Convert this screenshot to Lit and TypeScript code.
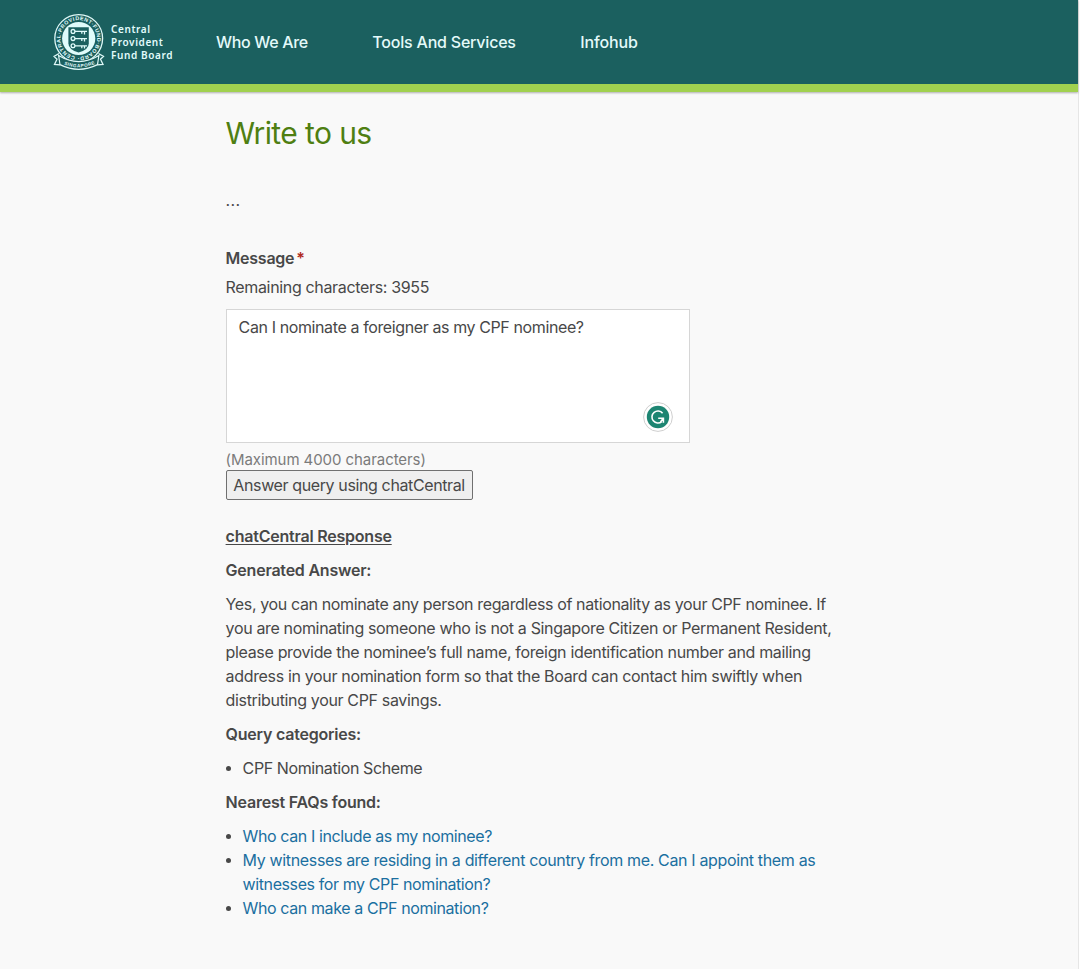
import { LitElement, html, css } from "lit";
import { customElement } from "lit/decorators.js";

@customElement("cpf-crest")
class CpfCrest extends LitElement {
  static styles = css`
    :host { display: block; width: 52px; height: 58px; }
    svg { display: block; }
    .ring { font: 700 5.3px "Liberation Sans", sans-serif; fill: #e2fcfc; }
    .band { font: 700 4.6px "Liberation Sans", sans-serif; fill: #e2fcfc; }
  `;
  render() {
    return html`<svg width="52" height="58" viewBox="0 0 52 58">
      <defs>
        <path id="circle" d="M22.2 43.5A18.3 18.3 0 0 1 29.2 7.5A18.3 18.3 0 0 1 22.2 43.5" />
        <path id="ribbon" d="M9 50.6Q25.6 58 42.5 50.6" />
      </defs>
      <circle cx="25.7" cy="25.5" r="23.9" fill="#1b605f" stroke="#dff8f7" stroke-width="1.3" />
      <circle cx="25.7" cy="25.5" r="16.6" fill="#e0fbfa" />
      <path d="M15.4 14.2h20.4v16q0 6.6-10.2 9.2q-10.2-2.6-10.2-9.2z" fill="#1b605f" />
      <g fill="none" stroke="#e0fbfa" stroke-width="1.3">
        <circle cx="20" cy="18.4" r="1.9" /><path d="M22 18.4h12M31.5 18.4v3M28.8 18.4v2.4" />
        <circle cx="20" cy="25.6" r="1.9" /><path d="M22 25.6h12M31.5 25.6v3M28.8 25.6v2.4" />
        <circle cx="20" cy="32.8" r="1.9" /><path d="M22 32.8h12M31.5 32.8v2.6M28.8 32.8v2.4" />
      </g>
      <text class="ring"><textPath href="#circle" textLength="112" lengthAdjust="spacing">CENTRAL·PROVIDENT·FUND·BOARD·</textPath></text>
      <path d="M6 40.5L1 43.4l3 2.8-2.5 5.2 5.6.4M45.5 40.5l5 2.9-3 2.8 2.5 5.2-5.6.4" fill="#1b605f" stroke="#dff8f7" stroke-width="1.3" />
      <path d="M5.6 42.5Q25.7 54.6 45.9 42.5L44.5 51.6Q25.7 61 7 51.6z" fill="#1b605f" stroke="#dff8f7" stroke-width="1.2" />
      <text class="band"><textPath href="#ribbon" startOffset="2" textLength="32" lengthAdjust="spacing">SINGAPORE</textPath></text>
    </svg>`;
  }
}

@customElement("app-root")
class AppRoot extends LitElement {
  static styles = css`
    :host {
      display: block; box-sizing: border-box; height: 969px; width: 1081px; overflow: hidden;
      background: #fff; color: #484848;
      font: 400 16px/24px Inter, sans-serif; white-space: nowrap;
    }
    * { box-sizing: border-box; }
    .page { width: 1079px; height: 969px; background: #f9f9f9; border-right: 1px solid #e6e6e6; }
    .header {
      height: 92px; width: 1078px; display: flex; align-items: flex-start; padding: 13px 0 0 53px;
      background: #1b605f; border-bottom: 8px solid #a1d14f; box-shadow: 0 1px 2px #0000004d;
    }
    .brand { width: 163px; display: flex; gap: 6px; color: #e2fcfc; }
    .name { font: 600 10px/13px "Noto Sans", sans-serif; letter-spacing: .6px; padding-top: 10px; }
    .nav { display: flex; gap: 64.5px; padding-top: 17px; color: #e4fafa; font-weight: 500; }
    .n1 { letter-spacing: -.33px; }
    .n2 { letter-spacing: -.21px; }
    .n3 { letter-spacing: -.15px; }
    main { padding: 21px 0 0 225.6px; }
    h1 { margin: 0; font: 400 30px/40px Inter, sans-serif; letter-spacing: -.6px; color: #4f7f12; }
    p { margin: 0 0 10px; letter-spacing: -.34px; }
    p.dots { margin: 35px 0 34px; letter-spacing: .4px; }
    .label { margin: 0 0 5px; font-weight: 600; letter-spacing: -.25px; }
    .req { color: #b02a1e; margin-left: 2px; }
    .box {
      width: 464px; height: 134px; padding: 5px 12px; background: #fff; border: 1px solid #d6d6d6;
      display: flex; flex-direction: column; justify-content: space-between; letter-spacing: -.39px;
    }
    .badge { display: block; align-self: flex-end; margin: 0 4px 5px 0; }
    p.hint { margin: 5px 0 -2px; font-size: 15px; color: #7b7b7b; letter-spacing: -.07px; }
    .ask {
      display: block; width: 247px; height: 30px; margin: 0 0 24px; padding: 0; font: inherit; color: #484848;
      background: #efefef; border: 1px solid #707070; border-radius: 2px; letter-spacing: -.38px;
    }
    p.strong { font-weight: 600; letter-spacing: -.22px; }
    .u { text-decoration: underline; text-underline-offset: 2px; }
    .tight { letter-spacing: -.375px; }
    ul { list-style: none; margin: 0 0 10px; padding: 0; letter-spacing: -.4px; }
    li { display: flex; }
    li::before { content: ""; width: 5px; height: 5px; border-radius: 50%; background: #484848; margin: 10px 12px 0 0; }
    a { color: #1b6fa0; }
    .wide { letter-spacing: -.35px; }
  `;
  render() {
    return html`<div class="page">
      <header class="header">
        <div class="brand"><cpf-crest></cpf-crest><div class="name">Central<br />Provident<br />Fund Board</div></div>
        <nav class="nav"><span class="n1">Who We Are</span><span class="n2">Tools And Services</span><span class="n3">Infohub</span></nav>
      </header>
      <main>
        <h1>Write to us</h1>
        <p class="dots">...</p>
        <div class="label">Message<span class="req">*</span></div>
        <p class="remain">Remaining characters: 3955</p>
        <div class="box"><span>Can I nominate a foreigner as my CPF nominee?</span>
          <svg class="badge" width="30" height="30" viewBox="0 0 30 30">
            <circle cx="15" cy="15" r="14.4" fill="#fff" stroke="#cfcfcf" />
            <circle cx="15" cy="15" r="11.2" fill="#1d8572" />
            <path d="M19.6 11.2A6 6 0 1 0 18.8 19.6M15.2 16.2h5.2v4.6M20.4 16.2l-3 3.8" fill="none" stroke="#fff" stroke-width="1.6" />
          </svg>
        </div>
        <p class="hint">(Maximum 4000 characters)</p>
        <button class="ask">Answer query using chatCentral</button>
        <p class="strong"><span class="u">chatCentral Response</span></p>
        <p class="strong">Generated Answer:</p>
        <p class="answer"><span class="tight">Yes, you can nominate any person regardless of nationality as your CPF nominee. If</span><br /><span class="wide">you are nominating someone who is not a Singapore Citizen or Permanent Resident,</span><br />please provide the nominee’s full name, foreign identification number and mailing<br />address in your nomination form so that the Board can contact him swiftly when<br />distributing your CPF savings.</p>
        <p class="strong">Query categories:</p>
        <ul><li>CPF Nomination Scheme</li></ul>
        <p class="strong">Nearest FAQs found:</p>
        <ul>
          <li><a>Who can I include as my nominee?</a></li>
          <li><a><span class="wide">My witnesses are residing in a different country from me. Can I appoint them as</span><br />witnesses for my CPF nomination?</a></li>
          <li><a>Who can make a CPF nomination?</a></li>
        </ul>
      </main>
    </div>`;
  }
}
